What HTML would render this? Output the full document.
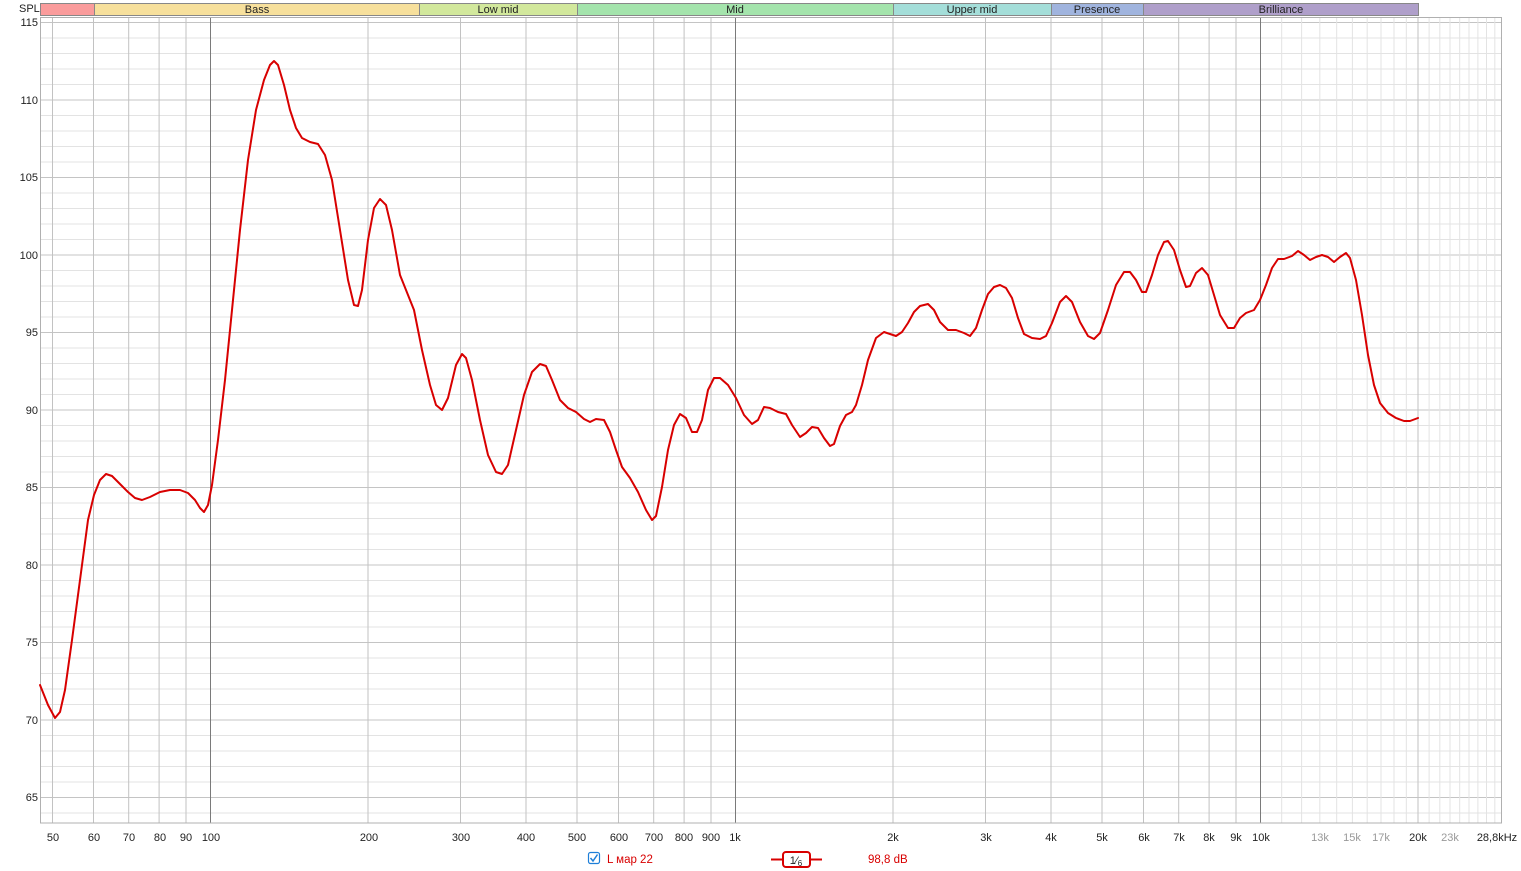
<!DOCTYPE html>
<html><head><meta charset="utf-8"><style>
html,body{margin:0;padding:0;background:#fff;width:1521px;height:871px;overflow:hidden;font-family:"Liberation Sans","DejaVu Sans",sans-serif}
svg{display:block}
text{font-family:"Liberation Sans","DejaVu Sans",sans-serif;font-size:11px;fill:#222}
</style></head><body>
<svg width="1521" height="871" viewBox="0 0 1521 871">
<!-- band bar -->
<g stroke="#888" stroke-width="1">
<rect x="40.5" y="3.5" width="54" height="12" fill="#fa9c9c"/>
<rect x="94.5" y="3.5" width="325" height="12" fill="#f7e09c"/>
<rect x="419.5" y="3.5" width="158" height="12" fill="#d2e89c"/>
<rect x="577.5" y="3.5" width="316" height="12" fill="#a4e4ac"/>
<rect x="893.5" y="3.5" width="158" height="12" fill="#a4ded9"/>
<rect x="1051.5" y="3.5" width="92" height="12" fill="#a0b4de"/>
<rect x="1143.5" y="3.5" width="275" height="12" fill="#af9fca"/>
</g>
<g text-anchor="middle" style="font-size:10.5px">
<text x="257" y="13">Bass</text><text x="498" y="13">Low mid</text><text x="735" y="13">Mid</text>
<text x="972" y="13">Upper mid</text><text x="1097" y="13">Presence</text><text x="1281" y="13">Brilliance</text>
</g>
<text x="19" y="12" style="font-size:11px">SPL</text>
<!-- horizontal grid -->
<g stroke="#e2e2e2" stroke-width="1" id="hminor"></g>
<g stroke-width="1">
<path stroke="#e3e3e3" d="M40 38H1501M40 53.5H1501M40 69H1501M40 84.5H1501M40 115.5H1501M40 131H1501M40 146.5H1501M40 162H1501M40 193H1501M40 208.5H1501M40 224H1501M40 239.5H1501M40 270.5H1501M40 286H1501M40 301.5H1501M40 317H1501M40 348H1501M40 363.5H1501M40 379H1501M40 394.5H1501M40 425.5H1501M40 441H1501M40 456.5H1501M40 472H1501M40 503H1501M40 518.5H1501M40 534H1501M40 549.5H1501M40 580.5H1501M40 596H1501M40 611.5H1501M40 627H1501M40 658H1501M40 673.5H1501M40 689H1501M40 704.5H1501M40 735.5H1501M40 751H1501M40 766.5H1501M40 782H1501M40 813H1501"/>
<path stroke="#c4c4c4" d="M40 22.5H1501M40 100H1501M40 177.5H1501M40 255H1501M40 332.5H1501M40 410H1501M40 487.5H1501M40 565H1501M40 642.5H1501M40 720H1501M40 797.5H1501"/>
<path stroke="#e3e3e3" d="M1281.7 17V823M1301.6 17V823M1319.8 17V823M1336.7 17V823M1352.4 17V823M1367.2 17V823M1381 17V823M1394 17V823M1406.3 17V823M1429.1 17V823M1439.8 17V823M1450 17V823M1459.7 17V823M1469 17V823M1477.9 17V823M1486.5 17V823M1494.8 17V823"/>
<path stroke="#c2c2c2" d="M52.5 17V823M93.5 17V823M128.7 17V823M159.1 17V823M186 17V823M368 17V823M460.5 17V823M526 17V823M577 17V823M618.5 17V823M653.7 17V823M684.1 17V823M711 17V823M893 17V823M985.5 17V823M1051 17V823M1102 17V823M1143.5 17V823M1178.7 17V823M1209.1 17V823M1236 17V823M1418 17V823"/>
<path stroke="#7a7a7a" d="M210.5 17V823M735.5 17V823M1260.5 17V823"/>
<rect x="40.5" y="17.5" width="1461" height="805.5" fill="none" stroke="#b0b0b0"/>
</g>
<!-- y labels -->
<g text-anchor="end" style="font-size:11.5px">
<text x="38" y="26">115</text><text x="38" y="104">110</text><text x="38" y="181">105</text><text x="38" y="259">100</text>
<text x="38" y="336">95</text><text x="38" y="414">90</text><text x="38" y="491">85</text><text x="38" y="569">80</text>
<text x="38" y="646">75</text><text x="38" y="724">70</text><text x="38" y="801">65</text>
</g>
<!-- x labels -->
<g text-anchor="middle" style="font-size:11px">
<text x="53" y="841">50</text><text x="94" y="841">60</text><text x="129" y="841">70</text><text x="160" y="841">80</text><text x="186" y="841">90</text><text x="211" y="841">100</text>
<text x="369" y="841">200</text><text x="461" y="841">300</text><text x="526" y="841">400</text><text x="577" y="841">500</text><text x="619" y="841">600</text><text x="654" y="841">700</text><text x="684" y="841">800</text><text x="711" y="841">900</text><text x="735" y="841">1k</text>
<text x="893" y="841">2k</text><text x="986" y="841">3k</text><text x="1051" y="841">4k</text><text x="1102" y="841">5k</text><text x="1144" y="841">6k</text><text x="1179" y="841">7k</text><text x="1209" y="841">8k</text><text x="1236" y="841">9k</text><text x="1261" y="841">10k</text>
<text x="1320" y="841" style="fill:#999">13k</text><text x="1352" y="841" style="fill:#999">15k</text><text x="1381" y="841" style="fill:#999">17k</text><text x="1418" y="841">20k</text><text x="1450" y="841" style="fill:#999">23k</text><text x="1497" y="841">28,8kHz</text>
</g>
<!-- curve -->
<polyline fill="none" stroke="#d80000" stroke-width="2" stroke-linejoin="round" stroke-linecap="round" points="40,685 48,705 55,718 60,712 65,690 72,640 80,580 88,520 94,495 100,480 106,474 112,476 120,484 128,492 135,498 142,500 150,497 160,492 170,490 180,490 188,493 195,500 200,508 204,512 208,505 212,485 218,440 225,380 232,310 240,230 248,160 256,110 264,80 270,65 274,61 278,65 284,85 290,110 296,128 302,138 310,142 318,144 325,155 332,180 340,230 348,280 354,305 358,306 362,290 368,240 374,208 380,199 386,205 392,230 400,275 406,290 414,310 422,350 430,385 436,405 442,410 448,398 456,365 462,354 466,358 472,380 480,420 488,455 496,472 502,474 508,465 516,430 524,395 532,372 540,364 546,366 552,380 560,400 568,408 576,412 584,419 590,422 596,419 604,420 610,432 616,450 622,467 630,478 638,492 646,510 652,520 656,516 662,487 668,450 674,425 680,414 686,418 692,432 697,432 702,420 708,390 714,378 720,378 728,385 736,398 744,415 752,424 758,420 764,407 770,408 778,412 786,414 792,425 800,437 806,433 812,427 818,428 824,438 830,446 834,444 840,426 846,415 852,412 856,405 862,385 868,360 876,338 884,332 890,334 896,336 902,332 908,323 914,312 920,306 928,304 934,310 940,322 948,330 956,330 964,333 970,336 976,328 982,310 988,294 994,287 1000,285 1006,288 1012,298 1018,318 1024,334 1032,338 1040,339 1046,336 1052,323 1060,302 1066,296 1072,302 1080,322 1088,336 1094,339 1100,333 1108,310 1116,285 1124,272 1130,272 1136,280 1142,292 1146,292 1152,275 1158,255 1164,242 1168,241 1174,250 1180,270 1186,287 1190,286 1196,273 1202,268 1208,275 1214,295 1220,315 1228,328 1234,328 1240,318 1246,313 1254,310 1260,300 1266,285 1272,268 1278,259 1284,259 1292,256 1298,251 1304,255 1310,260 1316,257 1322,255 1328,257 1334,262 1340,257 1346,253 1350,258 1356,280 1362,315 1368,355 1374,385 1380,403 1388,413 1396,418 1404,421 1410,421 1418,418"/>
<!-- legend -->
<rect x="588.5" y="852.5" width="11" height="11" rx="2" fill="#fff" stroke="#1e7fd8" stroke-width="1.2"/>
<path d="M590.5 858l2.5 3 4.5-6.5" fill="none" stroke="#1e7fd8" stroke-width="1.5"/>
<text x="607" y="863" style="fill:#d80000;font-size:11.5px">L мар 22</text>
<path d="M771 859.5H783M810 859.5H822" stroke="#d80000" stroke-width="2"/>
<rect x="783" y="852" width="27" height="15" rx="3" fill="#fff" stroke="#d80000" stroke-width="2"/>
<text x="796" y="864" text-anchor="middle" style="font-size:11px">1⁄<tspan style="font-size:8px" dy="2">6</tspan></text>
<text x="868" y="863" style="fill:#d80000;font-size:11.5px">98,8 dB</text>
</svg>
</body></html>
